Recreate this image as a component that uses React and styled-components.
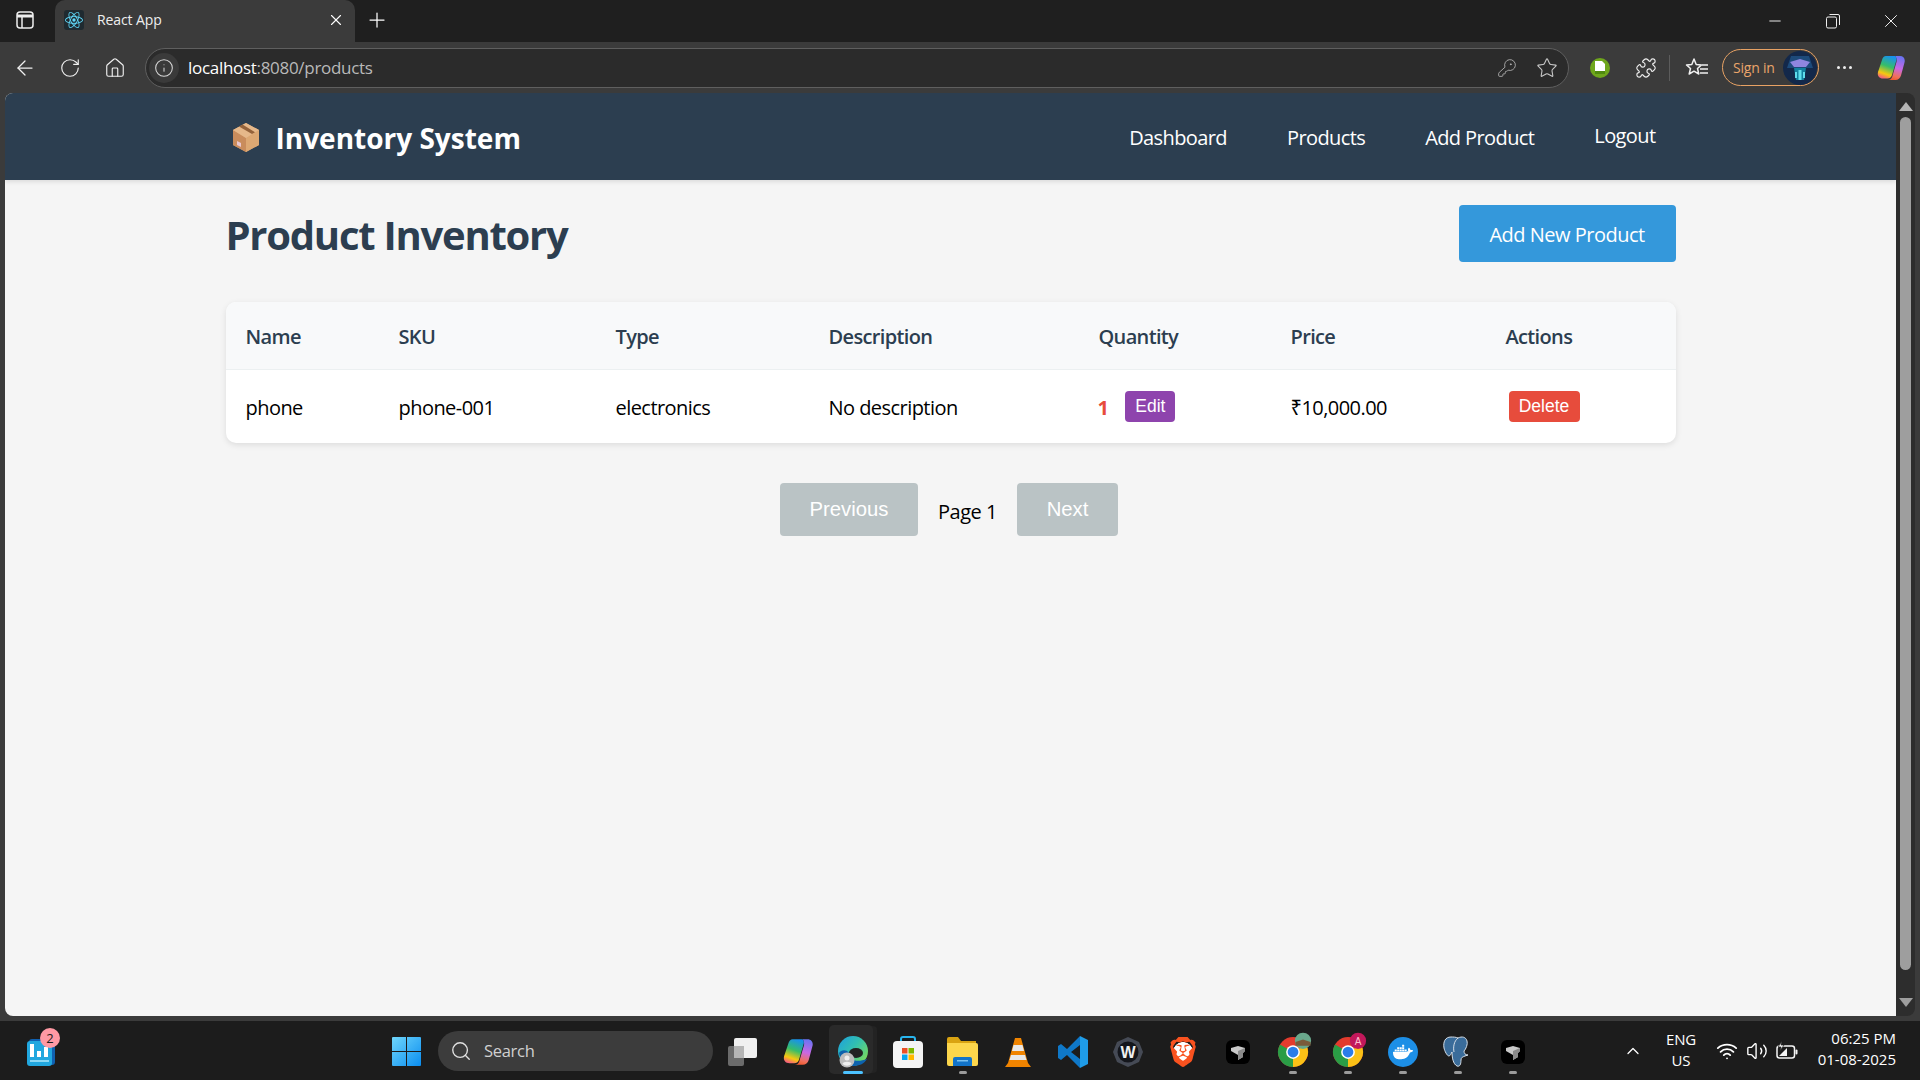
import React from "react";
import styled, { createGlobalStyle } from "styled-components";
import { ArrowLeft, RotateCw, House, Info, Star, KeyRound, Puzzle, X, Plus, Minus, Search, ChevronUp, Wifi, Volume2 } from "lucide-react";
import { SiBrave, SiDocker, SiReact } from "react-icons/si";

const ui = '"Open Sans", "Noto Sans", "Liberation Sans", sans-serif';
const Global = createGlobalStyle`
  html, body { margin: 0; padding: 0; height: 100%; overflow: hidden; background: #3b3b3b; }
  * { box-sizing: border-box; }
  #root { height: 100%; }
`;
const Screen = styled.div`
  height: 1080px; display: flex; flex-direction: column; font-family: ${ui}; background: #3b3b3b;
`;
/* browser tabs */
const TabStrip = styled.div`
  height: 42px; flex: none; display: flex; align-items: flex-end; background: #1f1f1f; color: #fff;
`;
const SidebarButton = styled.div`
  width: 55px; height: 42px; padding: 0 6px 3px 0; display: flex; align-items: center; justify-content: center; flex: none;
`;
const Tab = styled.div`
  width: 300px; height: 42px; background: #3b3b3b; border-radius: 10px 10px 0 0; display: flex; align-items: center; padding: 0 10px 2px 9px; flex: none;
`;
const Favicon = styled.div`
  width: 20px; height: 20px; background: #1f2a30; border-radius: 3px; display: flex; align-items: center; justify-content: center; color: #61dafb; margin-right: 13px;
`;
const TabTitle = styled.span`
  flex: 1; font-size: 14px; letter-spacing: -.1px; color: #eee; margin-bottom: 1px;
`;
const NewTab = styled.div`
  width: 44px; display: flex; justify-content: center; align-items: center; height: 42px; padding-bottom: 2px;
`;
const Spacer = styled.div`flex: 1;`;
const WinButton = styled.div`
  width: 58px; height: 42px; display: flex; justify-content: center; align-items: center; flex: none;
`;
/* toolbar */
const Toolbar = styled.div`
  height: 51px; flex: none; display: flex; align-items: center; background: #3b3b3b; color: #f0f0f0; padding-left: 2px;
`;
const NavIcon = styled.div`
  width: ${p => p.$w || 45}px; height: 40px; flex: none; display: flex; align-items: center; justify-content: center;
`;
const Address = styled.div`
  width: 1424px; margin-left: 8px; height: 40px; flex: none; border-radius: 20px; border: 1.5px solid #5f5f5f; background: #2b2b2b; display: flex; align-items: center; padding-right: 1px; color: #d8d8d8;
`;
const InfoPad = styled.div`
  width: 30px; height: 30px; margin: 0 9px 0 3px; border-radius: 50%; background: #3a3a3a; display: flex; align-items: center; justify-content: center; flex: none;
`;
const Url = styled.span`
  flex: 1; font-size: 17px; letter-spacing: -.3px; color: #b9b9b9;
  b { font-weight: 400; color: #fff; }
`;
const Divider = styled.div`
  width: 1px; height: 26px; background: #5c5c5c; margin: 0 2px 0 8px; flex: none;
`;
const SignIn = styled.div`
  width: 97px; height: 37px; border: 1.5px solid #e8a264; border-radius: 19px; display: flex; align-items: center; justify-content: space-between; padding: 0 1px 0 10px; flex: none; font-size: 14px; letter-spacing: -.2px; color: #eaa56b;
`;
const Dots = styled.div`
  display: flex; gap: 3px;
  i { width: 3px; height: 3px; border-radius: 50%; background: #eee; display: block; }
`;
/* page */
const Viewport = styled.div`
  flex: 1; min-height: 0; display: flex; padding: 0 5px; background: #3b3b3b;
`;
const Page = styled.div`
  flex: 1; min-width: 0; background: #f5f5f5; border-radius: 8px 0 0 8px; overflow: hidden; display: flex; flex-direction: column;
`;
const Scrollbar = styled.div`
  width: 19px; flex: none; background: #2d2d2d; border-radius: 0 8px 8px 0; display: flex; flex-direction: column; align-items: center; padding: 9px 0; justify-content: space-between;
`;
const Thumb = styled.div`
  flex: 1; width: 11px; background: #9e9e9e; border-radius: 6px; margin: 6px 0 28px;
`;
const Arrow = styled.div`
  width: 0; height: 0; border-left: 7px solid transparent; border-right: 7px solid transparent;
  ${p => p.$down ? "border-top: 9px solid #9e9e9e;" : "border-bottom: 9px solid #b5b5b5;"}
`;
const NavBar = styled.nav`
  height: 87px; flex: none; background: #2c3e50; box-shadow: 0 2px 4px rgba(0,0,0,.1); color: #fff; display: flex; justify-content: center;
`;
const NavInner = styled.div`
  width: 1450px; display: flex; align-items: center; justify-content: space-between; padding: 0 20px 0 4px;
`;
const Brand = styled.div`
  display: flex; align-items: center; gap: 14px; font-size: 28px; font-weight: 700; letter-spacing: 0;
  span { margin-top: 2px; }
`;
const Links = styled.div`
  display: flex; gap: 60px; font-size: 20px; align-items: center; padding-top: 2px;
`;
const NavLink = styled.a`
  color: #fff; letter-spacing: -.6px; margin-bottom: ${p => p.$raised ? 5 : 0}px;
`;
const Main = styled.main`
  width: 1450px; margin: 0 auto; padding-top: 25px;
`;
const Header = styled.div`
  display: flex; justify-content: space-between; align-items: center; height: 57px; margin-bottom: 40px;
`;
const Title = styled.h1`
  margin: 0; padding-top: 2px; font-size: 40px; font-weight: 700; color: #2c3e50; letter-spacing: -1.25px;
`;
const AddButton = styled.button`
  width: 217px; height: 57px; background: #3498db; color: #fff; border: 0; border-radius: 4px; padding: 2px 0 0; font-family: ${ui}; font-size: 20px; letter-spacing: -.5px;
`;
const TableCard = styled.table`
  width: 100%; border-collapse: separate; border-spacing: 0; table-layout: fixed; background: #fff; border-radius: 10px; overflow: hidden; box-shadow: 0 2px 6px rgba(0,0,0,.1);
`;
const Th = styled.th`
  height: 68px; padding: 2px 0 0 20px; background: #f8f9fa; text-align: left; font-size: 20px; font-weight: 600; color: #2c3e50; letter-spacing: -.65px; border-bottom: 1px solid #ecf0f1;
`;
const Td = styled.td`
  height: 73px; padding: 2px 0 0 20px; font-size: 20px; color: #000; letter-spacing: -.55px;
`;
const QtyCell = styled.div`
  display: flex; align-items: center; gap: 17px; margin-left: -1px;
`;
const Qty = styled.span`
  color: #e74c3c; font-weight: 700;
`;
const SmallButton = styled.button`
  height: 31px; width: ${p => p.$w}px; border: 0; border-radius: 4px; background: ${p => p.$bg}; color: #fff; font-family: "Liberation Sans", Arial, sans-serif; font-size: 17.5px; margin: -3px 0 0 ${p => p.$ml || 0}px; padding: 0; display: block;
`;
const Pager = styled.div`
  display: flex; justify-content: center; align-items: center; margin-top: 40px; padding-right: 3px;
`;
const PageButton = styled.button`
  height: 53px; width: ${p => p.$w}px; border: 0; border-radius: 4px; background: #bac3c5; color: #fff; font-family: "Liberation Sans", Arial, sans-serif; font-size: 20.3px; padding: 0;
`;
const PageLabel = styled.span`
  font-size: 20px; letter-spacing: -.5px; width: 99px; text-align: center; color: #000; margin-top: 3px;
`;
/* taskbar */
const TaskGap = styled.div`height: 5px; flex: none; background: #3b3b3b;`;
const Taskbar = styled.div`
  height: 59px; flex: none; background: #1c1c1c; display: grid; grid-template-columns: 1fr auto 1fr; align-items: center; color: #fff;
`;
const TaskLeft = styled.div`
  padding-left: 26px; display: flex; align-items: center; height: 100%;
`;
const Widgets = styled.div`
  position: relative; width: 30px; height: 30px; margin-top: 2px;
`;
const Badge = styled.span`
  position: absolute; left: 14px; top: -9px; width: 20px; height: 20px; border-radius: 50%; background: #ff99a4; color: #1c1c1c; font-size: 13px; display: flex; align-items: center; justify-content: center;
`;
const TaskCenter = styled.div`
  display: flex; align-items: center; height: 100%; margin-right: 1px;
`;
const TaskItem = styled.div`
  position: relative; width: 55px; height: 100%; display: flex; align-items: center; justify-content: center; padding-top: 2px;
`;
const Active = styled.div`
  position: absolute; left: 4px; top: 4px; width: 44px; height: 49px; background: #2a2a2a; border-radius: 5px; box-shadow: 5px 0 0 -1px #232323;
`;
const Running = styled.i`
  position: absolute; left: 50%; bottom: 6px; transform: translateX(-50%); height: 3.5px; border-radius: 2px; width: ${p => p.$active ? 20 : 8}px; background: ${p => p.$active ? "#4cc2ff" : "#9b9b9b"};
`;
const IconOver = styled.div`position: relative; z-index: 1; display: flex;`;
const SearchBox = styled.div`
  width: 275px; height: 40px; margin: 0 2px 0 4px; background: #3c3c3c; border-radius: 20px; display: flex; align-items: center; padding-left: 12px; gap: 12px; font-size: 16.5px; letter-spacing: -.3px; color: #d0d0d0;
`;
const Tray = styled.div`
  display: flex; justify-content: flex-end; align-items: center; height: 100%; padding-right: 24px;
`;
const TrayChevron = styled.div`
  width: 20px; display: flex; justify-content: center; margin-right: 11px;
`;
const Lang = styled.div`
  width: 54px; text-align: center; font-size: 15px; line-height: 21px; margin: -2px 4px 0 0; letter-spacing: -.2px;
`;
const TrayIcon = styled.div`
  width: 30px; display: flex; justify-content: center; align-items: center;
`;
const Clock = styled.div`
  width: 90px; margin: -3px 0 0 4px; text-align: right; font-size: 15px; line-height: 21px; letter-spacing: 0;
`;
const BoxIcon = () => (
  <svg width="32" height="32" viewBox="0 0 32 32">
    <path d="M16 2 29 9v15L16 31 3 24V9z" fill="#d9a26f" />
    <path d="M16 17v14L3 24V9z" fill="#c98c5c" />
    <path d="M16 17 29 9v15L16 31z" fill="#dda873" />
    <path d="M16 2 29 9 16 17 3 9z" fill="#e6b88a" />
    <path d="M9 5.5 22 13l3-1.8L12.500 3.500z" fill="#94623a" />
    <path d="M7 20l4 2v4l-4-2z" fill="#e8c7d0" />
  </svg>
);
const Restore = () => (
  <svg width="16" height="16" viewBox="0 0 16 16" fill="none" stroke="#eee"><rect x="1.500" y="4" width="10" height="11" rx="1.500" /><path d="M4.500 1.500H13a1.500 1.500 0 0 1 1.500 1.500v9" /></svg>
);
const PanelIcon = () => (
  <svg width="18" height="18" viewBox="0 0 18 18" fill="none" stroke="#eee" strokeWidth="1.500"><rect x="1" y="1" width="16" height="16" rx="3" /><path d="M1 5h16" strokeWidth="3" /><path d="M6 5v12" /></svg>
);
const FavStar = () => (
  <svg width="24" height="24" viewBox="0 0 24 24" fill="none" stroke="#f0f0f0" strokeWidth="1.500" strokeLinejoin="round"><path d="M9 3l2.200 5.500 5.300.4-4 3.600 1.300 5.500L9 15.200 4.200 18l1.300-5.500-4-3.600 5.300-.4z" /><path d="M17 9h6M15 13h8M15 17h8" /></svg>
);
const ExtGreen = () => (
  <svg width="20" height="20" viewBox="0 0 20 20"><circle cx="10" cy="10" r="10" fill="#6fa61c" /><path d="M5 3h7l3 3v9H5z" fill="#fff" /><path d="M5 13h10v3H5z" fill="#4f8a10" /></svg>
);
const Avatar = () => (
  <svg width="34" height="34" viewBox="0 0 34 34"><circle cx="17" cy="17" r="17" fill="#13284a" /><path d="M8 5h18l4 12H4z" fill="#1d4a7a" /><path d="M7 11l10-3 10 3-4 5H11z" fill="#8f86e0" /><path d="M11 17h12l-2 12h-8z" fill="#12809f" /><path d="M15.500 19h3v10h-3zM12 21h2v6h-2zM20 21h2v6h-2z" fill="#5fdcec" /></svg>
);
const Copilot = ({ s = 28, id = "t" }) => (
  <svg width={s} height={s} viewBox="0 0 28 28">
    <defs>
      <linearGradient id={`cpa${id}`} x1=".35" y1="1" x2=".65" y2="0"><stop offset="0" stopColor="#f4627a" /><stop offset=".2" stopColor="#f8c80f" /><stop offset=".55" stopColor="#35bd6a" /><stop offset="1" stopColor="#1891ee" /></linearGradient>
      <linearGradient id={`cpb${id}`} x1=".6" y1="0" x2=".4" y2="1"><stop offset="0" stopColor="#6a74f2" /><stop offset=".5" stopColor="#c968e4" /><stop offset=".85" stopColor="#f0705a" /><stop offset="1" stopColor="#f05a32" /></linearGradient>
    </defs>
    <path d="M18 2h5c3.500 0 5.500 3 4.500 6.500l-3.500 13C23.300 24 21 26 18.500 26H11c2 0 3.500-1 4.300-3.500L19.500 8c.6-2.500 0-5-1.500-6z" fill={`url(#cpb${id})`} />
    <path d="M9 2h9c1.500 1 2 3 1 5.500L15 21c-.7 2.500-2.500 3.500-4.500 3.500H6C2.500 24.500 0 22 1 18L5 6c.7-2.500 2-4 4-4z" fill={`url(#cpa${id})`} />
  </svg>
);
const WinLogo = () => (
  <svg width="29" height="29" viewBox="0 0 29 29">
    <defs><linearGradient id="wl" x1="0" y1="0" x2="1" y2="1"><stop offset="0" stopColor="#6fd6fb" /><stop offset="1" stopColor="#0a8df0" /></linearGradient></defs>
    <path d="M1 0h13v14H0V1a1 1 0 0 1 1-1zM15 0h13a1 1 0 0 1 1 1v13H15zM0 15h14v14H1a1 1 0 0 1-1-1zM15 15h14v13a1 1 0 0 1-1 1H15z" fill="url(#wl)" />
  </svg>
);
const TaskView = () => (
  <svg width="32" height="30" viewBox="0 0 32 30"><rect x="1" y="9" width="16" height="20" rx="2" fill="#6b6b6b" /><rect x="7" y="1" width="23" height="20" rx="2" fill="#f0f0f0" /><rect x="7" y="9" width="10" height="12" fill="#b5b5b5" /></svg>
);
const Edge = () => (
  <svg width="30" height="32" viewBox="0 0 30 32">
    <defs>
      <linearGradient id="eg" x1="0" y1="0" x2="1" y2=".8"><stop offset="0" stopColor="#1c9fe0" /><stop offset=".5" stopColor="#32c0b0" /><stop offset="1" stopColor="#7fdc55" /></linearGradient>
    </defs>
    <circle cx="15" cy="15" r="15" fill="url(#eg)" />
    <ellipse cx="18" cy="17" rx="7" ry="5" fill="#222" />
    <path d="M11 17c0 7 7 10 18 6-3 5-8 7-14 7C8 30 2 25 1 17c2-3 7-4 10 0z" fill="#0d62ad" />
    <circle cx="9" cy="24" r="7.500" fill="#bdbdbd" /><circle cx="9" cy="22" r="2.500" fill="#efefef" /><path d="M4.500 28c.5-3 8.500-3 9 0a7 7 0 0 1-9 0z" fill="#efefef" />
  </svg>
);
const Store = () => (
  <svg width="30" height="32" viewBox="0 0 30 32"><path d="M8 7V3q0-2 2-2h10q2 0 2 2v4" fill="none" stroke="#28b5ee" strokeWidth="2" /><rect y="5" width="30" height="27" rx="4" fill="#f4f4f4" /><rect x="9" y="12" width="5.500" height="5.500" fill="#ea4f25" /><rect x="15.500" y="12" width="5.500" height="5.500" fill="#7eb900" /><rect x="9" y="18.500" width="5.500" height="5.500" fill="#05a5ef" /><rect x="15.500" y="18.500" width="5.500" height="5.500" fill="#ffb900" /></svg>
);
const Folder = () => (
  <svg width="31" height="29" viewBox="0 0 31 29"><path d="M0 2a2 2 0 0 1 2-2h9l3 4h15v8H0z" fill="#d9a312" /><path d="M0 6h29a2 2 0 0 1 2 2v19a2 2 0 0 1-2 2H2a2 2 0 0 1-2-2z" fill="#fcd64c" /><path d="M6 22a2 2 0 0 1 2-2h15a2 2 0 0 1 2 2v7H6z" fill="#1273c8" /><rect x="10" y="23" width="11" height="1.500" fill="#79c1f0" /></svg>
);
const Vlc = () => (
  <svg width="26" height="30" viewBox="0 0 26 30"><path d="M10 1h6l7 25 3 4H0l3-4z" fill="#f08400" /><path d="M8.500 8h9l1.500 6H7zM6 18h14l1.500 5h-17z" fill="#e8e8e8" /></svg>
);
const VsCode = () => (
  <svg width="30" height="32" viewBox="0 0 30 32"><path d="M22 0l8 4v24l-8 4z" fill="#1f9ce8" /><path d="M22 0 9 13 3 8 0 10v12l3 2 6-5 13 13v-9l-9-7 9-7z" fill="#0f78c8" /></svg>
);
const Wave = () => (
  <svg width="30" height="30" viewBox="0 0 30 30"><path d="M15 0l11 5 4 10-4 10-11 5-11-5L0 15 4 5z" fill="#454a55" /><circle cx="15" cy="15" r="10.500" fill="#14161c" /><text x="15" y="20.500" textAnchor="middle" fontSize="16" fontWeight="700" fontFamily="Liberation Sans" fill="#f0f0f0">W</text></svg>
);
const BraveBack = styled.div`
  display: flex; background: radial-gradient(circle, #fff 45%, transparent 48%);
`;
const BraveIcon = () => (
  <BraveBack><SiBrave size={30} color="#f9521f" /></BraveBack>
);
const Cube = () => (
  <svg width="24" height="24" viewBox="0 0 24 24"><rect width="24" height="24" rx="6" fill="#000" /><path d="M5 8l7-2 7 2v3l-2 2v4l-5 3v-5l-7-4z" fill="#c9c9c9" /><path d="M12 11l7-3v3l-2 2v4l-5 3z" fill="#8a8a8a" /></svg>
);
const Chrome = ({ top }) => (
  <svg width="30" height="30" viewBox="0 0 24 24" style={{ overflow: "visible" }}>
    <circle cx="12" cy="12" r="12" fill="#e33b2e" />
    <path d="M12 12 1.600 6A12 12 0 0 0 12 24z" fill="#2a9d46" />
    <path d="M12 12V24A12 12 0 0 0 22.400 6z" fill="#fbc116" />
    <circle cx="12" cy="12" r="5.500" fill="#fff" /><circle cx="12" cy="12" r="4.300" fill="#2b7de9" />
    {top === "a" && <g><circle cx="20" cy="3" r="6.500" fill="#6aa88c" /><path d="M14 4l6-2 6 2v3h-12z" fill="#7a5a3a" /></g>}
    {top === "b" && <g><circle cx="20" cy="3" r="6.500" fill="#c2185b" /><text x="20" y="6" textAnchor="middle" fontSize="8" fill="#ffc0d0" fontFamily="Liberation Sans">A</text></g>}
  </svg>
);
const DockerIcon = () => (
  <svg width="30" height="30" viewBox="0 0 30 30"><circle cx="15" cy="15" r="15" fill="#1d8fe6" /><g transform="translate(5 5) scale(.84)"><SiDocker size={24} color="#fff" /></g></svg>
);
const Pg = () => (
  <svg width="30" height="32" viewBox="0 0 30 32"><path d="M8 1C2 1 0 6 1 12c.7 3 3 8 5 8 1 0 2-2 3-4 0 5 1 12 5 14 3 1 4-2 4-6 0-3 2-3 4-4l3-1c-3 0-4-2-4-4 2-2 4-7 3-10C23 1 19 0 15 2c-2-1-5-1-7-1z" fill="#3a6c9a" stroke="#d6dfe8" strokeWidth="1" /><path d="M15 2c-4 3-5 9-4 14" fill="none" stroke="#d6dfe8" /></svg>
);
const WidgetIcon = () => (
  <svg width="30" height="30" viewBox="0 0 30 30"><rect x="3" y="2" width="26" height="26" rx="3" fill="#1060b0" /><rect x="1" y="4" width="25" height="25" rx="3" fill="#21a7df" /><path d="M4 7h4v13H4zM11 14h4v6h-4zM18 10h4v10h-4z" fill="#fff" /><rect x="4" y="23" width="19" height="2" fill="#8ad8f5" /></svg>
);
const BatteryIcon = () => (
  <svg width="22" height="20" viewBox="0 0 22 20" fill="none"><rect x="1" y="5" width="17.500" height="12" rx="2.500" stroke="#f5f5f5" strokeWidth="1.500" /><rect x="19.500" y="8.500" width="2" height="5" rx="1" fill="#f5f5f5" /><path d="M3 15l8-8v8z" fill="#f5f5f5" /><path d="M6 0 2 6h3l-1 4 4-6H5z" fill="#f5f5f5" stroke="#1c1c1c" strokeWidth=".7" /></svg>
);
const taskApps = [
  [<Store key="a" />, 0], [<Folder key="b" />, 1], [<Vlc key="c" />, 0], [<VsCode key="d" />, 0], [<Wave key="e" />, 0], [<BraveIcon key="f" />, 0],
  [<Cube key="g" />, 0], [<Chrome key="h" top="a" />, 1], [<Chrome key="i" top="b" />, 1], [<DockerIcon key="j" />, 1], [<Pg key="k" />, 1], [<Cube key="l" />, 1],
];
export default function App() {
  return (
    <Screen>
      <Global />
      <TabStrip>
        <SidebarButton><PanelIcon /></SidebarButton>
        <Tab>
          <Favicon><SiReact size={18} /></Favicon>
          <TabTitle>React App</TabTitle>
          <X size={18} strokeWidth={1.5} />
        </Tab>
        <NewTab><Plus size={24} strokeWidth={1.25} /></NewTab>
        <Spacer />
        <WinButton><Minus size={18} strokeWidth={1.2} /></WinButton>
        <WinButton><Restore /></WinButton>
        <WinButton><X size={22} strokeWidth={1} /></WinButton>
      </TabStrip>
      <Toolbar>
        <NavIcon><ArrowLeft size={24} strokeWidth={1.25} /></NavIcon>
        <NavIcon><RotateCw size={22} strokeWidth={1.25} /></NavIcon>
        <NavIcon><House size={22} strokeWidth={1.25} /></NavIcon>
        <Address>
          <InfoPad><Info size={20} strokeWidth={1.25} /></InfoPad>
          <Url><b>localhost</b>:8080/products</Url>
          <NavIcon $w={40}><KeyRound size={20} strokeWidth={1} color="#bbb" /></NavIcon>
          <NavIcon $w={40}><Star size={22} strokeWidth={1.2} color="#c8c8c8" /></NavIcon>
        </Address>
        <NavIcon $w={62}><ExtGreen /></NavIcon>
        <NavIcon $w={30}><Puzzle size={22} strokeWidth={1.25} /></NavIcon>
        <Divider />
        <NavIcon $w={50}><FavStar /></NavIcon>
        <SignIn>Sign in<Avatar /></SignIn>
        <NavIcon $w={50}><Dots><i /><i /><i /></Dots></NavIcon>
        <NavIcon $w={44}><Copilot /></NavIcon>
      </Toolbar>
      <Viewport>
        <Page>
          <NavBar>
            <NavInner>
              <Brand><BoxIcon /><span>Inventory System</span></Brand>
              <Links>
                <NavLink>Dashboard</NavLink>
                <NavLink>Products</NavLink>
                <NavLink>Add Product</NavLink>
                <NavLink $raised>Logout</NavLink>
              </Links>
            </NavInner>
          </NavBar>
          <Main>
            <Header>
              <Title>Product Inventory</Title>
              <AddButton>Add New Product</AddButton>
            </Header>
            <TableCard>
              <colgroup>
                {[153, 217, 213, 270, 192, 215, 190].map(w => <col key={w} width={w} />)}
              </colgroup>
              <thead>
                <tr>
                  <Th>Name</Th><Th>SKU</Th><Th>Type</Th><Th>Description</Th><Th>Quantity</Th><Th>Price</Th><Th>Actions</Th>
                </tr>
              </thead>
              <tbody>
                <tr>
                  <Td>phone</Td><Td>phone-001</Td><Td>electronics</Td><Td>No description</Td>
                  <Td><QtyCell><Qty>1</Qty><SmallButton $w={50} $bg="#8e44ad">Edit</SmallButton></QtyCell></Td>
                  <Td>₹10,000.00</Td>
                  <Td><SmallButton $w={71} $bg="#e74c3c" $ml={3}>Delete</SmallButton></Td>
                </tr>
              </tbody>
            </TableCard>
            <Pager>
              <PageButton $w={138} disabled>Previous</PageButton>
              <PageLabel>Page 1</PageLabel>
              <PageButton $w={101} disabled>Next</PageButton>
            </Pager>
          </Main>
        </Page>
        <Scrollbar><Arrow /><Thumb /><Arrow $down /></Scrollbar>
      </Viewport>
      <TaskGap />
      <Taskbar>
        <TaskLeft><Widgets><WidgetIcon /><Badge>2</Badge></Widgets></TaskLeft>
        <TaskCenter>
          <TaskItem><WinLogo /></TaskItem>
          <SearchBox><Search size={22} strokeWidth={1.5} color="#e0e0e0" />Search</SearchBox>
          <TaskItem><TaskView /></TaskItem>
          <TaskItem><Copilot s={30} id="b" /></TaskItem>
          <TaskItem><Active /><IconOver><Edge /></IconOver><Running $active /></TaskItem>
          {taskApps.map(([icon, on], i) => <TaskItem key={i}>{icon}{on ? <Running /> : null}</TaskItem>)}
        </TaskCenter>
        <Tray>
          <TrayChevron><ChevronUp size={22} strokeWidth={1.5} /></TrayChevron>
          <Lang>ENG<br />US</Lang>
          <TrayIcon><Wifi size={22} strokeWidth={2} /></TrayIcon>
          <TrayIcon><Volume2 size={22} strokeWidth={1.5} /></TrayIcon>
          <TrayIcon><BatteryIcon /></TrayIcon>
          <Clock>06:25 PM<br />01-08-2025</Clock>
        </Tray>
      </Taskbar>
    </Screen>
  );
}
